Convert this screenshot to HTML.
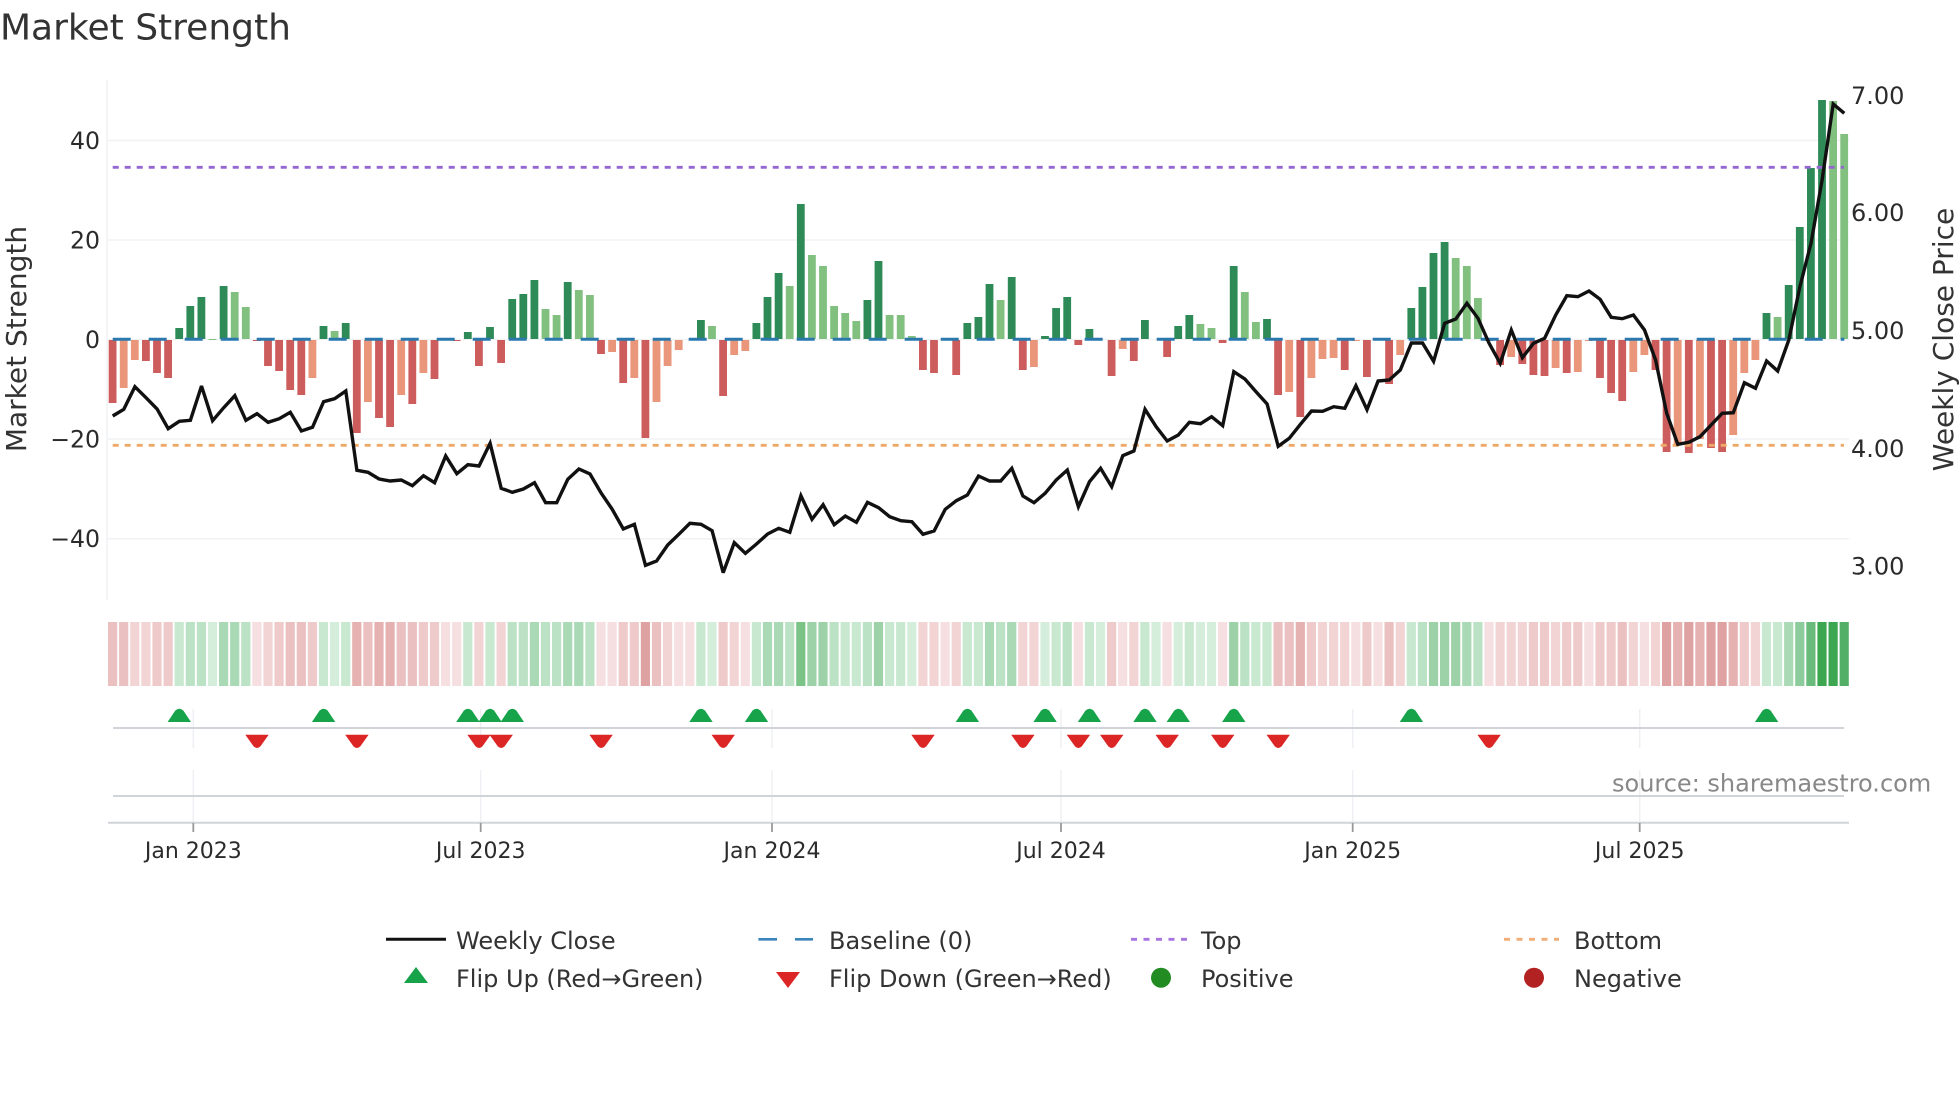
<!DOCTYPE html>
<html lang="en">
<head>
<meta charset="utf-8">
<title>Market Strength</title>
<style>
html,body{margin:0;padding:0;background:#fff}
body{width:1960px;height:1102px;position:relative;overflow:hidden;font-family:"DejaVu Sans","Liberation Sans",sans-serif}
svg{position:absolute;left:0;top:0}
svg text{font-family:"DejaVu Sans","Liberation Sans",sans-serif}
.bars{position:absolute;left:107.1px;top:339px;height:0;display:flex;transform-origin:0 0;transform:scaleX(.1)}
.bars i{display:block;flex:none;width:78px;margin:0 16px 0 17px}
.a{background:#2e8b57;align-self:flex-end}
.b{background:#81c07f;align-self:flex-end}
.c{background:#cd5c5c;align-self:flex-start;margin-top:1px!important}
.e{background:#e9967a;align-self:flex-start;margin-top:1px!important}
.heat{position:absolute;left:108.1px;top:622px;height:64px;display:flex;transform-origin:0 0;transform:scaleX(.1)}
.heat i{display:block;flex:none;width:92px;margin-right:19px;height:64px}
.r1{background:#f5dfe0}.r2{background:#f2d4d5}.r3{background:#efcaca}.r4{background:#ebc0c0}.r5{background:#e5b1b1}.r6{background:#dea2a2}
.g1{background:#d5eddb}.g2{background:#c8e8d0}.g3{background:#bbe2c5}.g4{background:#aad9b6}.g5{background:#9dd2a9}.g6{background:#7cc388}.g7{background:#8ccb9b}.g8{background:#68bb7a}.g9{background:#3ca650}.g10{background:#53ae66}
</style>
</head>
<body>
<svg width="1960" height="1102" viewBox="0 0 1960 1102">
<g stroke="#f1f2f4" stroke-width="1.5" fill="none">
<path d="M107 80V600"/>
<path d="M108 140.5H1849M108 240H1849M108 339.5H1849M108 439H1849M108 538.7H1849"/>
</g>
</svg>
<div class="bars"><i class=c style=height:62.5px></i><i class=e style=height:48px></i><i class=e style=height:20px></i><i class=c style=height:20.7px></i><i class=c style=height:33px></i><i class=c style=height:37.5px></i><i class=a style=height:11px></i><i class=a style=height:33px></i><i class=a style=height:42px></i><i class=b style=height:.5px></i><i class=a style=height:53.5px></i><i class=b style=height:47px></i><i class=b style=height:32.5px></i><i class=c style=height:.5px></i><i class=c style=height:25.5px></i><i class=c style=height:31px></i><i class=c style=height:50px></i><i class=c style=height:55px></i><i class=e style=height:38px></i><i class=a style=height:13px></i><i class=b style=height:8px></i><i class=a style=height:16px></i><i class=c style=height:93px></i><i class=e style=height:62px></i><i class=c style=height:78px></i><i class=c style=height:87px></i><i class=e style=height:55px></i><i class=c style=height:64px></i><i class=e style=height:32.5px></i><i class=c style=height:39px></i><i></i><i class=c style=height:.5px></i><i class=a style=height:7px></i><i class=c style=height:26px></i><i class=a style=height:12px></i><i class=c style=height:23px></i><i class=a style=height:40px></i><i class=a style=height:45px></i><i class=a style=height:59px></i><i class=b style=height:30px></i><i class=b style=height:24px></i><i class=a style=height:56.7px></i><i class=b style=height:49px></i><i class=b style=height:44px></i><i class=c style=height:14px></i><i class=e style=height:12px></i><i class=c style=height:43px></i><i class=e style=height:38px></i><i class=c style=height:98px></i><i class=e style=height:62px></i><i class=e style=height:26px></i><i class=e style=height:9.5px></i><i></i><i class=a style=height:19px></i><i class=b style=height:13px></i><i class=c style=height:56px></i><i class=e style=height:15px></i><i class=e style=height:11px></i><i class=a style=height:16px></i><i class=a style=height:42px></i><i class=a style=height:66px></i><i class=b style=height:53px></i><i class=a style=height:135px></i><i class=b style=height:84px></i><i class=b style=height:73px></i><i class=b style=height:33px></i><i class=b style=height:26px></i><i class=b style=height:18px></i><i class=a style=height:39px></i><i class=a style=height:78px></i><i class=b style=height:24px></i><i class=b style=height:24px></i><i class=b style=height:3px></i><i class=c style=height:30px></i><i class=c style=height:33px></i><i></i><i class=c style=height:35px></i><i class=a style=height:16px></i><i class=a style=height:22px></i><i class=a style=height:55px></i><i class=b style=height:39px></i><i class=a style=height:62px></i><i class=c style=height:30px></i><i class=e style=height:27px></i><i class=a style=height:3.5px></i><i class=a style=height:31px></i><i class=a style=height:42px></i><i class=c style=height:5px></i><i class=a style=height:10px></i><i></i><i class=c style=height:36px></i><i class=e style=height:9px></i><i class=c style=height:21px></i><i class=a style=height:19px></i><i></i><i class=c style=height:17px></i><i class=a style=height:13px></i><i class=a style=height:24.5px></i><i class=b style=height:15.5px></i><i class=b style=height:11px></i><i class=c style=height:3px></i><i class=a style=height:73px></i><i class=b style=height:47px></i><i class=b style=height:17px></i><i class=a style=height:20px></i><i class=c style=height:55px></i><i class=e style=height:52px></i><i class=c style=height:77px></i><i class=e style=height:38px></i><i class=e style=height:18.5px></i><i class=e style=height:18px></i><i class=c style=height:30px></i><i class=e style=height:.5px></i><i class=c style=height:37px></i><i></i><i class=c style=height:44px></i><i class=e style=height:15px></i><i class=a style=height:31px></i><i class=a style=height:52px></i><i class=a style=height:86px></i><i class=a style=height:97px></i><i class=b style=height:81px></i><i class=b style=height:73px></i><i class=b style=height:41px></i><i class=c style=height:.5px></i><i class=c style=height:25px></i><i class=e style=height:17px></i><i class=c style=height:24px></i><i class=c style=height:35px></i><i class=c style=height:36px></i><i class=e style=height:28px></i><i class=c style=height:33px></i><i class=e style=height:31.5px></i><i class=e style=height:.5px></i><i class=c style=height:37.5px></i><i class=c style=height:53px></i><i class=c style=height:60.5px></i><i class=e style=height:32px></i><i class=e style=height:15px></i><i class=c style=height:30px></i><i class=c style=height:112px></i><i class=e style=height:104px></i><i class=c style=height:113px></i><i class=e style=height:99px></i><i class=c style=height:108px></i><i class=c style=height:112px></i><i class=e style=height:95px></i><i class=e style=height:33px></i><i class=e style=height:20px></i><i class=a style=height:26px></i><i class=b style=height:22px></i><i class=a style=height:54px></i><i class=a style=height:112px></i><i class=a style=height:171px></i><i class=a style=height:239px></i><i class=b style=height:238px></i><i class=b style=height:205px></i></div>
<div class="heat"><i class=r4></i><i class=r4></i><i class=r2></i><i class=r2></i><i class=r3></i><i class=r3></i><i class=g2></i><i class=g3></i><i class=g3></i><i class=g1></i><i class=g4></i><i class=g4></i><i class=g3></i><i class=r1></i><i class=r2></i><i class=r3></i><i class=r4></i><i class=r4></i><i class=r3></i><i class=g2></i><i class=g1></i><i class=g2></i><i class=r5></i><i class=r4></i><i class=r5></i><i class=r5></i><i class=r4></i><i class=r4></i><i class=r3></i><i class=r3></i><i class=r1></i><i class=r1></i><i class=g2></i><i class=r2></i><i class=g2></i><i class=r2></i><i class=g3></i><i class=g3></i><i class=g4></i><i class=g3></i><i class=g3></i><i class=g4></i><i class=g4></i><i class=g3></i><i class=r1></i><i class=r1></i><i class=r3></i><i class=r3></i><i class=r6></i><i class=r4></i><i class=r2></i><i class=r1></i><i class=r1></i><i class=g2></i><i class=g1></i><i class=r3></i><i class=r2></i><i class=r1></i><i class=g2></i><i class=g4></i><i class=g4></i><i class=g3></i><i class=g6></i><i class=g5></i><i class=g5></i><i class=g3></i><i class=g2></i><i class=g2></i><i class=g3></i><i class=g5></i><i class=g2></i><i class=g2></i><i class=g1></i><i class=r2></i><i class=r2></i><i class=r1></i><i class=r2></i><i class=g2></i><i class=g2></i><i class=g4></i><i class=g3></i><i class=g4></i><i class=r2></i><i class=r2></i><i class=g1></i><i class=g2></i><i class=g3></i><i class=r1></i><i class=g2></i><i class=g1></i><i class=r3></i><i class=r1></i><i class=r2></i><i class=g2></i><i class=g1></i><i class=r1></i><i class=g1></i><i class=g2></i><i class=g1></i><i class=g1></i><i class=r1></i><i class=g5></i><i class=g3></i><i class=g2></i><i class=g2></i><i class=r4></i><i class=r4></i><i class=r5></i><i class=r3></i><i class=r2></i><i class=r2></i><i class=r2></i><i class=r1></i><i class=r3></i><i class=r1></i><i class=r4></i><i class=r2></i><i class=g2></i><i class=g3></i><i class=g5></i><i class=g5></i><i class=g5></i><i class=g4></i><i class=g3></i><i class=r1></i><i class=r2></i><i class=r2></i><i class=r2></i><i class=r3></i><i class=r3></i><i class=r2></i><i class=r3></i><i class=r3></i><i class=r1></i><i class=r3></i><i class=r3></i><i class=r4></i><i class=r2></i><i class=r1></i><i class=r2></i><i class=r6></i><i class=r5></i><i class=r6></i><i class=r5></i><i class=r6></i><i class=r6></i><i class=r5></i><i class=r3></i><i class=r2></i><i class=g2></i><i class=g2></i><i class=g4></i><i class=g7></i><i class=g8></i><i class=g9></i><i class=g9></i><i class=g10></i></div>
<svg width="1960" height="1102" viewBox="0 0 1960 1102">
<defs>
<path id="u" d="M-11.7 0H11.7L4-11.5Q0-15-4-11.5Z" fill="#16a34a"/>
<path id="d" d="M-11.7 0H11.7L3.5 11.5Q0 15-3.5 11.5Z" fill="#dc2626"/>
</defs>
<path d="M112.7 167.3H1844" stroke="#9467d0" stroke-width="2.8" stroke-dasharray="6 6" fill="none"/>
<path d="M112.7 445.3H1844" stroke="#eea868" stroke-width="2.8" stroke-dasharray="6 6" fill="none"/>
<path d="M112.7 339.3H1844.3" stroke="#2a78ad" stroke-width="3" stroke-dasharray="18 18" fill="none"/>
<polyline fill="none" stroke="#111" stroke-width="3.4" stroke-linejoin="miter" stroke-miterlimit="3" points="112.7,416 123.8,409.3 134.9,386.7 146,397.7 157.1,409 168.2,428.7 179.3,421.3 190.4,420.3 201.5,386 212.6,420.7 223.7,407.7 234.8,395.7 245.9,420.3 257,413.7 268.1,422.3 279.2,418.7 290.3,412.3 301.4,431 312.5,427.3 323.6,401.7 334.7,398.7 345.8,391 356.9,470.3 368,472.3 379.1,479 390.2,481 401.3,480 412.4,485.7 423.5,475.7 434.6,482.7 445.7,456 456.8,473.7 467.9,464.7 479,466 490.1,443.3 501.2,488.3 512.3,492.3 523.4,489 534.5,482.7 545.6,502.7 556.7,502.7 567.8,479.3 578.9,469 590,474 601.1,493 612.2,509.3 623.3,529 634.4,524.3 645.5,565.3 656.6,561 667.7,545 678.8,534.3 689.9,523.3 701,524.3 712.1,530.7 723.2,572.7 734.3,542.7 745.4,553.3 756.5,544 767.6,534 778.7,528.3 789.8,532.3 800.9,495.7 812,519.3 823.1,504.7 834.2,524.7 845.3,516 856.4,522.3 867.5,502.3 878.6,507.7 889.7,516.7 900.8,520.7 911.9,521.7 923,534.3 934.1,531 945.2,509.3 956.3,500.7 967.4,495 978.5,476 989.6,481 1000.7,481 1011.8,468.3 1022.9,496 1034,502.7 1045.1,493.3 1056.2,480 1067.3,470 1078.4,506.7 1089.5,481.7 1100.6,468.3 1111.7,486.7 1122.8,455.7 1133.9,451 1145,409.3 1156.1,426.7 1167.2,441 1178.3,435 1189.4,422.3 1200.5,423.7 1211.6,416.7 1222.7,425.7 1233.8,371.7 1244.9,379 1256,391.7 1267.1,404 1278.2,446.3 1289.3,438.3 1300.4,424.3 1311.5,411 1322.6,411.3 1333.7,406.7 1344.8,408.3 1355.9,385.7 1367,409.7 1378.1,381 1389.2,380 1400.3,370 1411.4,343 1422.5,343 1433.6,361.3 1444.7,323.3 1455.8,319 1466.9,303.3 1478,318.3 1489.1,343.3 1500.2,363.3 1511.3,330 1522.4,357.7 1533.5,343.3 1544.6,338.3 1555.7,315 1566.8,295.7 1577.9,296.7 1589,291 1600.1,299.3 1611.2,317.3 1622.3,318.7 1633.4,315 1644.5,330 1655.6,360 1666.7,413.3 1677.8,444.3 1688.9,442.3 1700,436.7 1711.1,425 1722.2,413.3 1733.3,412.7 1744.4,382.7 1755.5,388.3 1766.6,361 1777.7,371 1788.8,340 1799.9,286.7 1811,243.3 1822.1,180 1833.2,104 1844.3,113.3"/>
<g stroke="#eef0f4" stroke-width="1.5" fill="none">
<path d="M193.3 709V748M480.7 709V748M772 709V748M1061 709V748M1352.7 709V748M1639.7 709V748"/>
<path d="M193.3 770V822M480.7 770V822M772 770V822M1061 770V822M1352.7 770V822M1639.7 770V822"/>
</g>
<g stroke="#d0d3d7" stroke-width="2" fill="none">
<path d="M113 728H1844M113 796H1844M108 822.7H1849"/>
</g>
<path d="M193.3 823V832M480.7 823V832M772 823V832M1061 823V832M1352.7 823V832M1639.7 823V832" stroke="#999" stroke-width="1.8" fill="none"/>
<g>
<use href="#u" x="179.3" y="722"/><use href="#u" x="323.6" y="722"/><use href="#u" x="467.9" y="722"/><use href="#u" x="490.1" y="722"/><use href="#u" x="512.3" y="722"/><use href="#u" x="701" y="722"/><use href="#u" x="756.5" y="722"/><use href="#u" x="967.4" y="722"/><use href="#u" x="1045.1" y="722"/><use href="#u" x="1089.5" y="722"/><use href="#u" x="1145" y="722"/><use href="#u" x="1178.3" y="722"/><use href="#u" x="1233.8" y="722"/><use href="#u" x="1411.4" y="722"/><use href="#u" x="1766.6" y="722"/>
<use href="#d" x="257" y="734.7"/><use href="#d" x="356.9" y="734.7"/><use href="#d" x="479" y="734.7"/><use href="#d" x="501.2" y="734.7"/><use href="#d" x="601.1" y="734.7"/><use href="#d" x="723.2" y="734.7"/><use href="#d" x="923" y="734.7"/><use href="#d" x="1022.9" y="734.7"/><use href="#d" x="1078.4" y="734.7"/><use href="#d" x="1111.7" y="734.7"/><use href="#d" x="1167.2" y="734.7"/><use href="#d" x="1222.7" y="734.7"/><use href="#d" x="1278.2" y="734.7"/><use href="#d" x="1489.1" y="734.7"/>
</g>
<text x="0" y="39.7" font-size="36" fill="#333">Market Strength</text>
<g font-size="23.6" fill="#2b2b2b" text-anchor="end">
<text x="100" y="149">40</text>
<text x="100" y="248.5">20</text>
<text x="100" y="348">0</text>
<text x="100" y="447.5">−20</text>
<text x="100" y="547">−40</text>
</g>
<g font-size="24" fill="#2b2b2b">
<text x="1851" y="104">7.00</text>
<text x="1851" y="221">6.00</text>
<text x="1851" y="339">5.00</text>
<text x="1851" y="457">4.00</text>
<text x="1851" y="574.5">3.00</text>
</g>
<text transform="translate(26 339) rotate(-90)" font-size="28" fill="#333" text-anchor="middle">Market Strength</text>
<text transform="translate(1953 339.5) rotate(-90)" font-size="28" fill="#333" text-anchor="middle">Weekly Close Price</text>
<g font-size="22" fill="#2b2b2b" text-anchor="middle">
<text x="193.3" y="858">Jan 2023</text>
<text x="480.7" y="858">Jul 2023</text>
<text x="772" y="858">Jan 2024</text>
<text x="1061" y="858">Jul 2024</text>
<text x="1352.7" y="858">Jan 2025</text>
<text x="1639.7" y="858">Jul 2025</text>
</g>
<text x="1612" y="791.7" font-size="24" fill="#888">source: sharemaestro.com</text>
<path d="M386 939.3H446" stroke="#111" stroke-width="3" fill="none"/>
<path d="M758.4 939.3H777M795 939.3H813" stroke="#3a85bb" stroke-width="2.6" fill="none"/>
<path d="M1131 939.3H1187" stroke="#a873e2" stroke-width="2.8" stroke-dasharray="6 6.5" fill="none"/>
<path d="M1504 939.3H1559" stroke="#f0ae76" stroke-width="2.8" stroke-dasharray="6 6.5" fill="none"/>
<path d="M404 983H428L416 967Z" fill="#16a34a"/>
<path d="M776 972H800L788 988Z" fill="#dc2626"/>
<circle cx="1161" cy="977.7" r="10" fill="#228b22"/>
<circle cx="1534" cy="977.7" r="10" fill="#b22222"/>
<g font-size="24" fill="#333">
<text x="456" y="949">Weekly Close</text>
<text x="829" y="949">Baseline (0)</text>
<text x="1201" y="949">Top</text>
<text x="1574" y="949">Bottom</text>
<text x="456" y="987">Flip Up (Red→Green)</text>
<text x="829" y="987">Flip Down (Green→Red)</text>
<text x="1201" y="987">Positive</text>
<text x="1574" y="987">Negative</text>
</g>
</svg>
</body>
</html>
